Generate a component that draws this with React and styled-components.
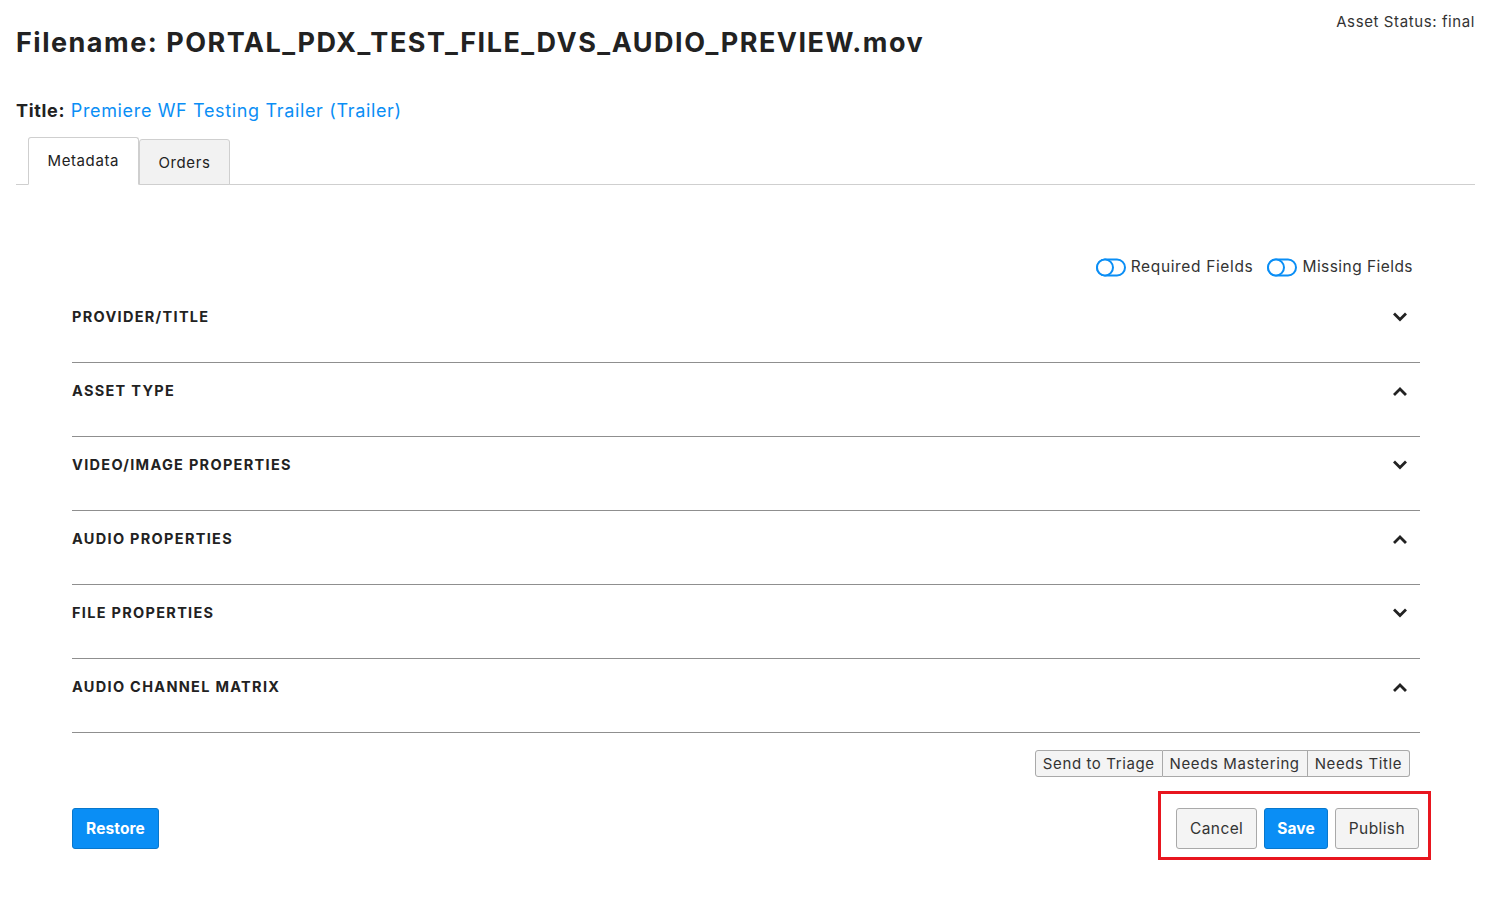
import React from "react";
import styled, { createGlobalStyle } from "styled-components";

const GlobalStyle = createGlobalStyle`
  html, body {
    margin: 0;
    background: #fff;
    font-family: "Inter", "Lato", sans-serif;
    color: #2b2b2b;
  }
`;

const BLUE = "#0a8ef5";

const Page = styled.div`
  padding: 0 15px 40px 16px;
  width: 1490px;
  box-sizing: border-box;
`;

const Header = styled.header`
  display: flex;
  justify-content: space-between;
  align-items: flex-start;
`;

const Filename = styled.h1`
  margin: 26px 0 0;
  font-size: 27px;
  font-weight: 700;
  line-height: 34px;
  letter-spacing: 1.5px;
  color: #222;
`;

const Status = styled.div`
  margin-top: 12px;
  font-size: 15px;
  line-height: 20px;
  letter-spacing: 0.6px;
  color: #333;
`;

const TitleLine = styled.div`
  margin-top: 39px;
  font-size: 18px;
  line-height: 24px;
  letter-spacing: 0.65px;
  b {
    font-weight: 700;
    color: #222;
  }
  a {
    color: ${BLUE};
    text-decoration: none;
  }
`;

const TabBar = styled.div`
  display: flex;
  align-items: flex-end;
  margin-top: 13px;
  padding-left: 12px;
  border-bottom: 1px solid #cfcfcf;
  height: 48px;
`;

const Tab = styled.div`
  box-sizing: border-box;
  height: ${(p) => (p.$active ? "48px" : "46px")};
  margin-bottom: -1px;
  padding: 0 ${(p) => (p.$active ? "18.5px" : "19px")};
  display: flex;
  align-items: center;
  font-size: 15px;
  letter-spacing: 0.6px;
  color: #222;
  background: ${(p) => (p.$active ? "#fff" : "#f2f2f2")};
  border: 1px solid #cfcfcf;
  border-bottom: ${(p) => (p.$active ? "1px solid #fff" : "1px solid #cfcfcf")};
  border-radius: 3px 3px 0 0;
  padding-bottom: ${(p) => (p.$active ? "1px" : "0")};
`;

const Panel = styled.div`
  padding: 0 55px 0 56px;
`;

const ToggleRow = styled.div`
  display: flex;
  justify-content: flex-end;
  gap: 14px;
  margin-top: 72px;
  margin-bottom: 12px;
  padding-right: 7px;
`;

const Toggle = styled.label`
  display: flex;
  align-items: center;
  gap: 5px;
  font-size: 15.5px;
  line-height: 20px;
  letter-spacing: ${(p) => p.$spacing || "0.6px"};
  color: #333;
`;

const Section = styled.div`
  display: flex;
  justify-content: space-between;
  align-items: center;
  padding: 18px 13px 35px 0;
  border-bottom: 1px solid #8f8f8f;
`;

const SectionTitle = styled.span`
  font-size: 14.5px;
  line-height: 20px;
  font-weight: 700;
  letter-spacing: 1.3px;
  color: #222;
`;

const StatusGroup = styled.div`
  display: flex;
  justify-content: flex-end;
  margin-top: 17px;
  padding-right: 10px;
`;

const GroupButton = styled.button`
  font-family: inherit;
  font-size: 15px;
  letter-spacing: 0.6px;
  color: #333;
  background: #f4f4f4;
  height: 27px;
  padding: 0 7px;
  border: 1px solid #a9a9a9;
  border-left-width: ${(p) => (p.$first ? "1px" : "0")};
  border-radius: ${(p) => (p.$first ? "3px 0 0 3px" : p.$last ? "0 3px 3px 0" : "0")};
`;

const Actions = styled.div`
  display: flex;
  justify-content: space-between;
  align-items: flex-start;
  margin-top: 14px;
  margin-right: -11px;
`;

const Button = styled.button`
  font-family: inherit;
  font-size: 15.5px;
  letter-spacing: ${(p) => (p.$primary ? "0.1px" : "0.4px")};
  height: 41px;
  padding: 0 ${(p) => (p.$primary ? "12px" : "13px")};
  border-radius: 3px;
  border: 1px solid ${(p) => (p.$primary ? "#0877cc" : "#a9a9a9")};
  background: ${(p) => (p.$primary ? BLUE : "#f4f4f4")};
  color: ${(p) => (p.$primary ? "#fff" : "#333")};
  font-weight: ${(p) => (p.$primary ? 700 : 400)};
`;

const RestoreButton = styled(Button)`
  margin-top: 17px;
  width: 87px;
  padding: 0;
`;

const Highlight = styled.div`
  display: flex;
  gap: 7px;
  padding: 14px 9px 8px 15px;
  border: 3px solid #e8161f;
`;

const ToggleIcon = () => (
  <svg width="30" height="19" viewBox="0 0 30 19">
    <rect x="1" y="1.5" width="28" height="16" rx="8" fill="none" stroke={BLUE} strokeWidth="2" />
    <circle cx="9" cy="9.5" r="8" fill="#fff" stroke={BLUE} strokeWidth="2" />
  </svg>
);

const Chevron = ({ up }) => (
  <svg width="14" height="10" viewBox="0 0 14 10">
    <polyline
      points={up ? "2,8 7,3 12,8" : "2,2.5 7,7.5 12,2.5"}
      fill="none"
      stroke="#222"
      strokeWidth="2.8"
      strokeLinecap="square"
    />
  </svg>
);

const sections = [
  { name: "PROVIDER/TITLE", open: false },
  { name: "ASSET TYPE", open: true },
  { name: "VIDEO/IMAGE PROPERTIES", open: false },
  { name: "AUDIO PROPERTIES", open: true },
  { name: "FILE PROPERTIES", open: false },
  { name: "AUDIO CHANNEL MATRIX", open: true },
];

export default function App() {
  return (
    <>
      <GlobalStyle />
      <Page>
        <Header>
          <Filename>Filename: PORTAL_PDX_TEST_FILE_DVS_AUDIO_PREVIEW.mov</Filename>
          <Status>Asset Status: final</Status>
        </Header>
        <TitleLine>
          <b>Title:</b> <a href="#">Premiere WF Testing Trailer (Trailer)</a>
        </TitleLine>
        <TabBar>
          <Tab $active>Metadata</Tab>
          <Tab>Orders</Tab>
        </TabBar>
        <Panel>
          <ToggleRow>
            <Toggle $spacing="0.65px">
              <ToggleIcon />
              Required Fields
            </Toggle>
            <Toggle $spacing="0.45px">
              <ToggleIcon />
              Missing Fields
            </Toggle>
          </ToggleRow>
          {sections.map((s) => (
            <Section key={s.name}>
              <SectionTitle>{s.name}</SectionTitle>
              <Chevron up={s.open} />
            </Section>
          ))}
          <StatusGroup>
            <GroupButton $first>Send to Triage</GroupButton>
            <GroupButton>Needs Mastering</GroupButton>
            <GroupButton $last>Needs Title</GroupButton>
          </StatusGroup>
          <Actions>
            <RestoreButton $primary>Restore</RestoreButton>
            <Highlight>
              <Button>Cancel</Button>
              <Button $primary>Save</Button>
              <Button>Publish</Button>
            </Highlight>
          </Actions>
        </Panel>
      </Page>
    </>
  );
}
